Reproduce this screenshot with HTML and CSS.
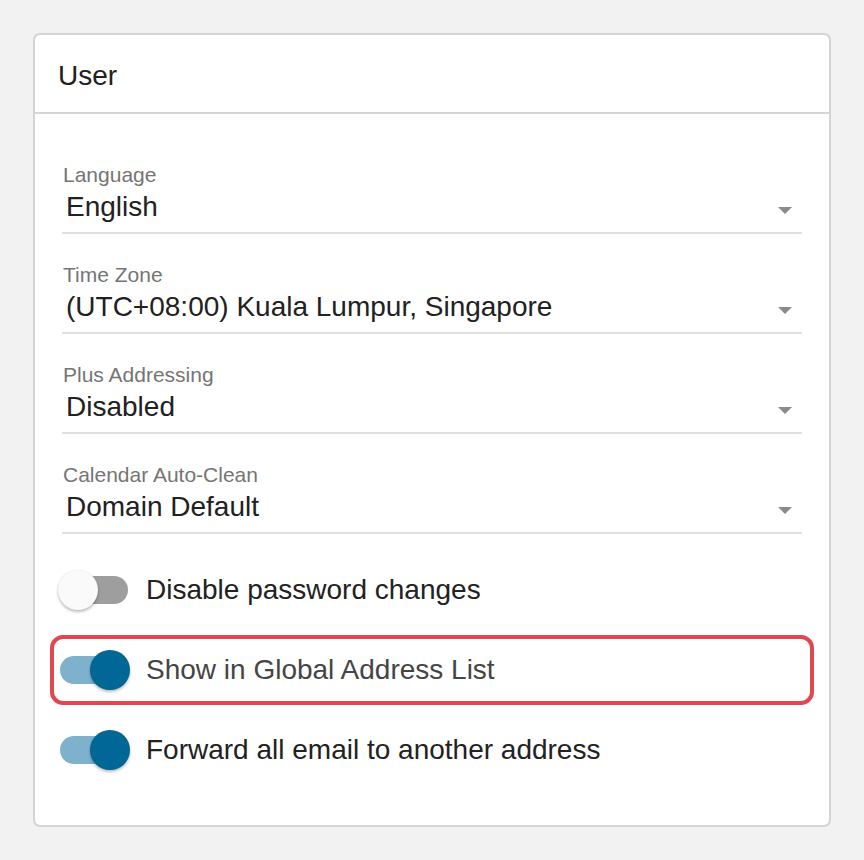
FILE: index.html
```html
<!DOCTYPE html>
<html lang="en">
<head>
<meta charset="utf-8">
<title>User settings</title>
<link rel="stylesheet" href="styles.css">
</head>
<body>
<div class="card">
  <div class="card-header">User</div>
  <div class="card-body">
    <div class="field">
      <div class="field-label">Language</div>
      <div class="field-select"><span class="field-value">English</span><span class="caret"></span></div>
    </div>
    <div class="field">
      <div class="field-label">Time Zone</div>
      <div class="field-select"><span class="field-value">(UTC+08:00) Kuala Lumpur, Singapore</span><span class="caret"></span></div>
    </div>
    <div class="field">
      <div class="field-label">Plus Addressing</div>
      <div class="field-select"><span class="field-value">Disabled</span><span class="caret"></span></div>
    </div>
    <div class="field">
      <div class="field-label">Calendar Auto-Clean</div>
      <div class="field-select"><span class="field-value">Domain Default</span><span class="caret"></span></div>
    </div>

    <div class="toggles">
      <div class="toggle-row">
        <span class="switch"><span class="thumb"></span></span>
        <span class="toggle-text">Disable password changes</span>
      </div>
      <div class="toggle-row highlighted">
        <span class="switch on"><span class="thumb"></span></span>
        <span class="toggle-text muted">Show in Global Address List</span>
      </div>
      <div class="toggle-row">
        <span class="switch on"><span class="thumb"></span></span>
        <span class="toggle-text">Forward all email to another address</span>
      </div>
    </div>
  </div>
</div>
</body>
</html>
```

FILE: styles.css
```css
html, body {
  margin: 0;
  padding: 0;
}
body {
  background: #f2f2f2;
  font-family: "Liberation Sans", Arial, sans-serif;
  color: #212121;
  padding: 33px;
}
.card {
  width: 794px;
  height: 790px;
  background: #fff;
  border: 2px solid #d4d4d4;
  border-radius: 7px;
}
.card-header {
  font-size: 28px;
  line-height: 34px;
  padding: 24px 23px 19px;
  border-bottom: 2px solid #d6d6d6;
}
.card-body {
  padding: 49px 27px 0;
}
.field {
  margin-bottom: 29px;
}
.field-label {
  font-size: 21px;
  line-height: 24px;
  color: #757575;
  padding-left: 1px;
  margin-bottom: 4px;
}
.field-select {
  display: flex;
  align-items: center;
  justify-content: space-between;
  padding: 0 10px 9px 4px;
  border-bottom: 2px solid #e0e0e0;
}
.field-value {
  font-size: 28px;
  line-height: 32px;
}
.caret {
  width: 0;
  height: 0;
  border-left: 7px solid transparent;
  border-right: 7px solid transparent;
  border-top: 7px solid #8a8a8a;
  margin-top: 6px;
}
.toggles {
  display: flex;
  flex-direction: column;
  gap: 40px;
  margin-top: 36px;
}
.toggle-row {
  position: relative;
  display: flex;
  align-items: center;
  height: 40px;
}
.highlighted::after {
  content: "";
  position: absolute;
  top: -15px;
  bottom: -15px;
  left: -12px;
  right: -12px;
  border: 4.5px solid #e2474f;
  border-radius: 13px;
}
.switch {
  position: relative;
  width: 68px;
  height: 28px;
  border-radius: 14px;
  background: #9e9e9e;
  margin-left: -2px;
  flex: none;
}
.switch.on {
  background: #7fb1cc;
}
.thumb {
  position: absolute;
  top: -6px;
  left: -2px;
  width: 40px;
  height: 40px;
  border-radius: 50%;
  background: #fafafa;
  box-shadow: 0 2px 3px rgba(0,0,0,0.25), 0 0 1px rgba(0,0,0,0.15);
}
.switch.on .thumb {
  left: 30px;
  background: #006797;
}
.toggle-text {
  font-size: 28px;
  line-height: 32px;
  margin-left: 18px;
  color: #222;
}
.toggle-text.muted {
  color: #454545;
}
```
